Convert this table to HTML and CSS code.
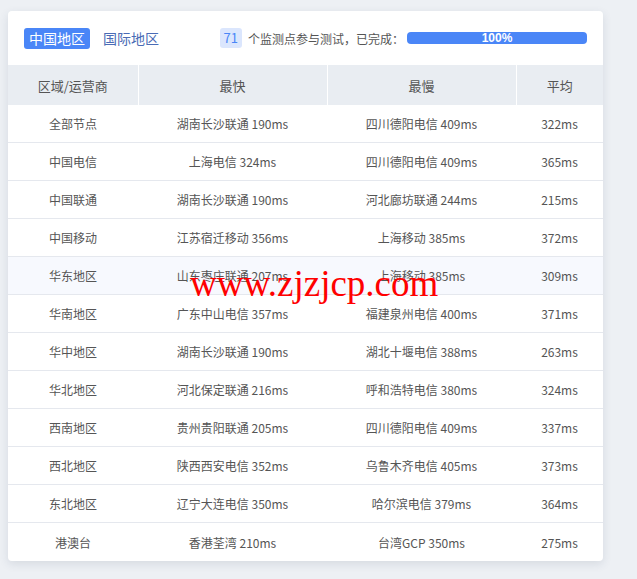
FILE: index.html
```html
<!DOCTYPE html>
<html lang="zh">
<head>
<meta charset="utf-8">
<link rel="stylesheet" href="styles.css">
</head>
<body>
<div class="card">
  <div class="top">
    <div class="tabs">
      <span class="tab active">中国地区</span>
      <span class="tab">国际地区</span>
    </div>
    <div class="status">
      <span class="badge">71</span>
      <span class="status-text">个监测点参与测试，已完成：</span>
      <div class="bar"><div class="fill" style="width:100%">100%</div></div>
    </div>
  </div>
  <table class="grid">
    <colgroup><col class="c1"><col class="c2"><col class="c3"><col class="c4"></colgroup>
    <thead>
      <tr><th>区域/运营商</th><th>最快</th><th>最慢</th><th>平均</th></tr>
    </thead>
    <tbody>
      <tr><td>全部节点</td><td>湖南长沙联通 190ms</td><td>四川德阳电信 409ms</td><td>322ms</td></tr>
      <tr><td>中国电信</td><td>上海电信 324ms</td><td>四川德阳电信 409ms</td><td>365ms</td></tr>
      <tr><td>中国联通</td><td>湖南长沙联通 190ms</td><td>河北廊坊联通 244ms</td><td>215ms</td></tr>
      <tr><td>中国移动</td><td>江苏宿迁移动 356ms</td><td>上海移动 385ms</td><td>372ms</td></tr>
      <tr class="hover"><td>华东地区</td><td>山东枣庄联通 207ms</td><td>上海移动 385ms</td><td>309ms</td></tr>
      <tr><td>华南地区</td><td>广东中山电信 357ms</td><td>福建泉州电信 400ms</td><td>371ms</td></tr>
      <tr><td>华中地区</td><td>湖南长沙联通 190ms</td><td>湖北十堰电信 388ms</td><td>263ms</td></tr>
      <tr><td>华北地区</td><td>河北保定联通 216ms</td><td>呼和浩特电信 380ms</td><td>324ms</td></tr>
      <tr><td>西南地区</td><td>贵州贵阳联通 205ms</td><td>四川德阳电信 409ms</td><td>337ms</td></tr>
      <tr><td>西北地区</td><td>陕西西安电信 352ms</td><td>乌鲁木齐电信 405ms</td><td>373ms</td></tr>
      <tr><td>东北地区</td><td>辽宁大连电信 350ms</td><td>哈尔滨电信 379ms</td><td>364ms</td></tr>
      <tr class="last"><td>港澳台</td><td>香港荃湾 210ms</td><td>台湾GCP 350ms</td><td>275ms</td></tr>
    </tbody>
  </table>
</div>
<div class="watermark">www.zjzjcp.com</div>
</body>
</html>
```
FILE: styles.css
```css
html, body {
  margin: 0;
  padding: 0;
  background: #edf0f4;
}
body {
  padding: 11px 0 0 8px;
  font-family: "Noto Sans CJK SC", "Liberation Sans", sans-serif;
  color: #555;
  position: relative;
  height: 579px;
  box-sizing: border-box;
}
.card {
  width: 595px;
  background: #fff;
  border-radius: 4px;
  box-shadow: 0 3px 10px rgba(40, 60, 90, 0.12);
  overflow: hidden;
}
.top {
  height: 54px;
  display: flex;
  align-items: center;
  padding: 0 16px;
  box-sizing: border-box;
  white-space: nowrap;
}
.tabs {
  display: flex;
  gap: 8px;
  align-items: center;
  flex-shrink: 0;
}
.tab {
  font-size: 14px;
  line-height: 21px;
  padding: 0 5px;
  border-radius: 3px;
  color: #4a6bb5;
}
.tab.active {
  background: #4a86f7;
  color: #fff;
}
.status {
  display: flex;
  align-items: center;
  margin-left: auto;
  flex-shrink: 0;
}
.badge {
  background: #dbe6fd;
  color: #4a86f7;
  font-size: 13px;
  line-height: 20px;
  padding: 0 4px;
  border-radius: 3px;
  min-width: 14px;
  text-align: center;
}
.status-text {
  font-size: 12px;
  color: #555;
  margin-left: 6px;
}
.bar {
  width: 180px;
  height: 12px;
  border-radius: 4px;
  background: #e6ecf5;
  margin-left: 3px;
  overflow: hidden;
}
.fill {
  height: 12px;
  background: #4a86f7;
  color: #fff;
  font-family: "Liberation Sans", sans-serif;
  font-weight: bold;
  font-size: 12px;
  line-height: 12px;
  text-align: center;
}
.grid {
  width: 595px;
  border-collapse: collapse;
  table-layout: fixed;
}
.c1 { width: 130px; }
.c2 { width: 189px; }
.c3 { width: 189px; }
.c4 { width: 87px; }
th {
  background: #e9edf2;
  height: 40px;
  font-weight: normal;
  font-size: 13px;
  color: #555;
  border-left: 1px solid #fff;
  padding: 0;
}
th:first-child { border-left: none; }
td {
  height: 37px;
  border-bottom: 1px solid #e5e8ee;
  text-align: center;
  font-size: 12px;
  color: #555;
  padding: 0;
}
tr.last td { border-bottom: none; height: 38px; }
tr.hover td { background: #f7f9fe; }
.watermark {
  position: absolute;
  left: 190px;
  top: 262px;
  font-family: "Liberation Serif", serif;
  font-size: 37px;
  color: #ff0000;
  line-height: 44px;
  pointer-events: none;
}
```
